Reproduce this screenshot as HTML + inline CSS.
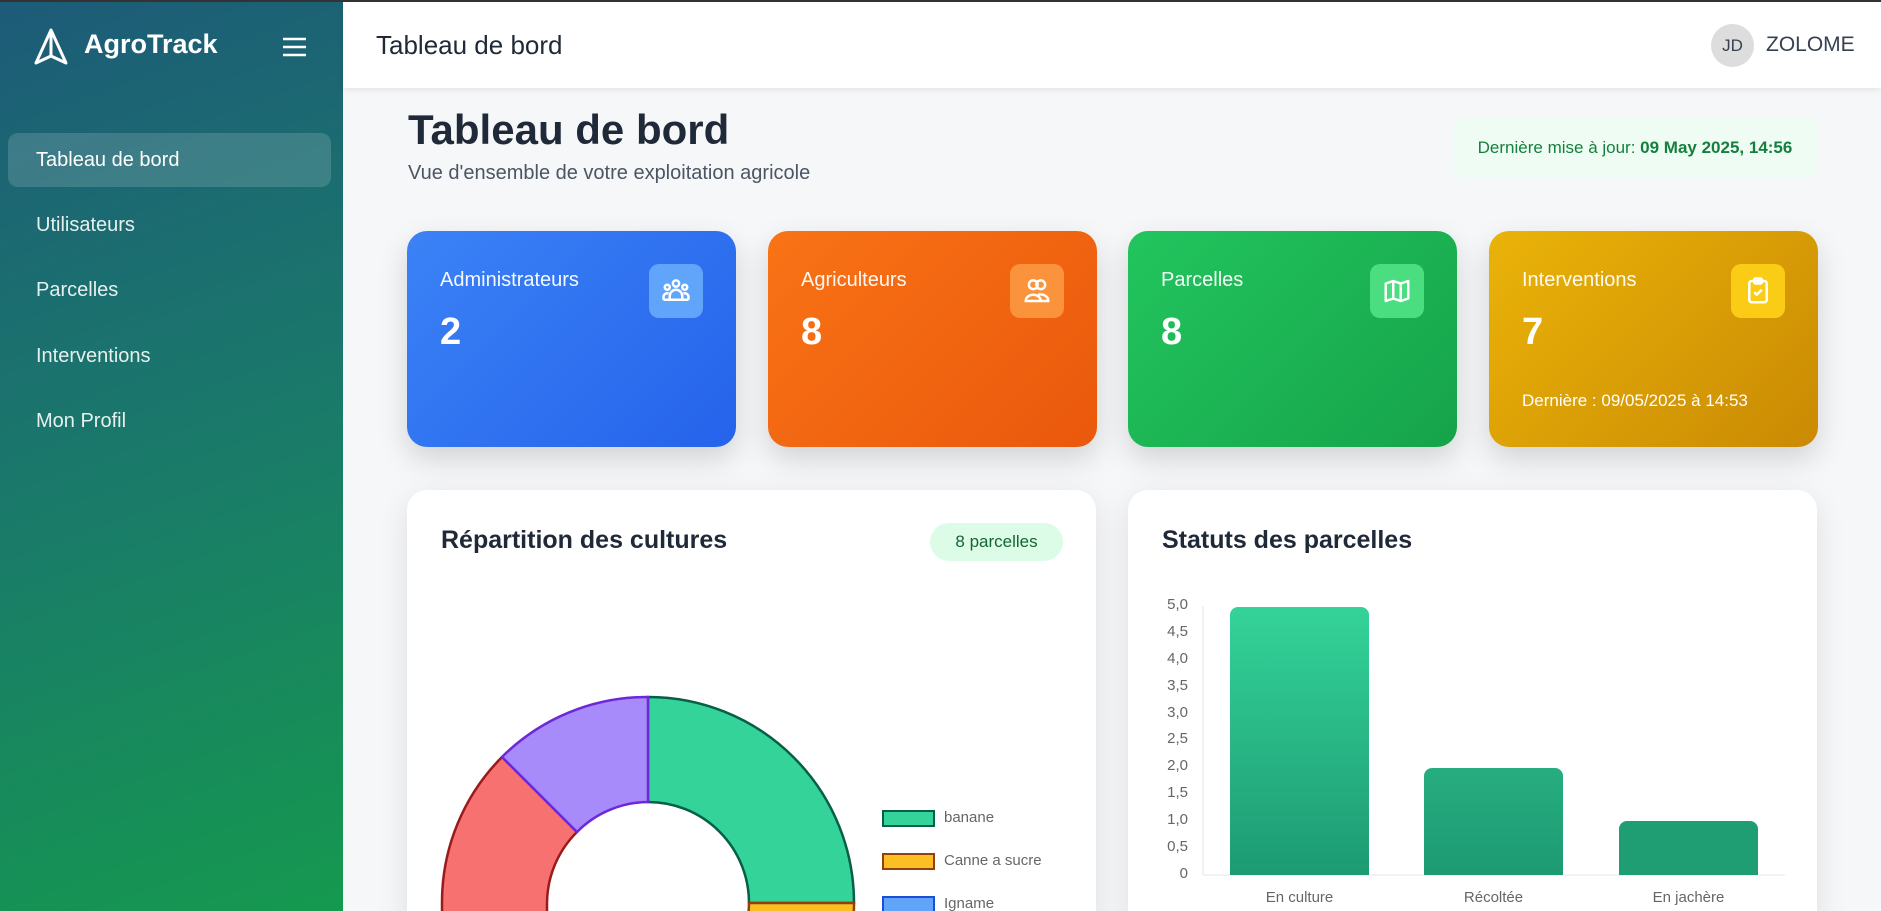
<!DOCTYPE html>
<html style="width:1881px;height:911px;overflow:hidden"><head><meta charset="utf-8"><style>
*{box-sizing:border-box;margin:0;padding:0}
body{width:1881px;height:911px;overflow:hidden;font-family:"Liberation Sans",sans-serif;background:#f6f7f9;position:relative;border-top:2px solid #333}
.side{position:absolute;left:0;top:0;width:343px;height:911px;background:linear-gradient(160deg,#1d5b78 0%,#1a7a6a 50%,#15994f 100%)}
.logo{position:absolute;left:33px;top:26px}
.brand{position:absolute;left:84px;top:27px;color:#fff;font-weight:bold;font-size:27px}
.ham{position:absolute;left:282px;top:34px}
.nav{position:absolute;left:8px;width:323px;height:54px;border-radius:10px;color:#e6f0ee;font-size:20px;padding-left:28px;line-height:54px}
.nav.act{background:rgba(255,255,255,.15);color:#fff}
.head{position:absolute;left:343px;top:0;right:0;height:86px;background:#fff;box-shadow:0 2px 6px rgba(0,0,0,.08)}
.head h1{position:absolute;left:33px;top:28px;font-size:26px;font-weight:normal;color:#1f2937}
.av{position:absolute;left:1368px;top:22px;width:43px;height:43px;border-radius:50%;background:#ddd;color:#374151;font-size:17px;text-align:center;line-height:43px}
.user{position:absolute;left:1423px;top:31px;font-size:21px;color:#374151}
.title{position:absolute;left:408px;top:104px;font-size:42px;font-weight:bold;color:#1f2937}
.sub{position:absolute;left:408px;top:160px;font-size:20px;color:#4b5563}
.upd{position:absolute;left:1453px;top:116px;width:364px;height:59px;background:#effcf3;border-radius:8px;color:#15803d;font-size:17px;line-height:59px;text-align:center}
.card{position:absolute;top:229px;width:329px;height:216px;border-radius:20px;color:#fff;box-shadow:0 12px 30px rgba(0,0,0,.15)}
.card .l{position:absolute;left:33px;top:38px;font-size:20px;opacity:.95}
.card .n{position:absolute;left:33px;top:80px;font-size:38px;font-weight:bold}
.card .i{position:absolute;right:33px;top:33px;width:54px;height:54px;border-radius:10px;display:flex;align-items:center;justify-content:center}
.card .d{position:absolute;left:33px;top:160px;font-size:17px}
.pan{position:absolute;top:488px;height:460px;background:#fff;border-radius:20px;box-shadow:0 8px 30px rgba(0,0,0,.1)}
.pill{position:absolute;left:930px;top:521px;width:133px;height:38px;border-radius:19px;background:#dcfce7;color:#166534;font-size:17px;text-align:center;line-height:38px}
.lg{position:absolute;left:882px;width:53px;height:17px;border:2px solid}
.lt{position:absolute;left:944px;font-size:15px;color:#666}
.yl{position:absolute;width:40px;left:1148px;text-align:right;font-size:15px;color:#666}
.bar{position:absolute;width:139px;border-radius:8px 8px 0 0;background:linear-gradient(#34d399,#1d9a72)}
.xl{position:absolute;top:887px;font-size:15px;color:#666;width:139px;text-align:center}
</style></head><body>
<div class="side">
<svg class="logo" width="36" height="38" viewBox="0 0 36 38"><path d="M18 2 L3 35 L18 28 L33 35 Z M18 2 L18 28" fill="none" stroke="#fff" stroke-width="3" stroke-linejoin="round"/></svg>
<div class="brand">AgroTrack</div>
<svg class="ham" width="25" height="22" viewBox="0 0 25 22"><path d="M1 3H24M1 11H24M1 19H24" stroke="#fff" stroke-width="2.5"/></svg>
<div class="nav act" style="top:131px">Tableau de bord</div>
<div class="nav" style="top:196px">Utilisateurs</div>
<div class="nav" style="top:261px">Parcelles</div>
<div class="nav" style="top:327px">Interventions</div>
<div class="nav" style="top:392px">Mon Profil</div>
</div>
<div class="head"><h1>Tableau de bord</h1><div class="av">JD</div><div class="user">ZOLOME</div></div>
<div class="title">Tableau de bord</div>
<div class="sub">Vue d'ensemble de votre exploitation agricole</div>
<div class="upd">Dernière mise à jour: <b>09 May 2025, 14:56</b></div>

<div class="card" style="left:407px;background:linear-gradient(135deg,#3b82f6,#2563eb)"><div class="l">Administrateurs</div><div class="n">2</div><div class="i" style="background:#60a5fa"><svg width="30" height="30" viewBox="0 0 24 24" fill="none" stroke="#fff" stroke-width="2"><circle cx="12" cy="6" r="2.5"/><circle cx="5" cy="9" r="2"/><circle cx="19" cy="9" r="2"/><path d="M7 19v-3a5 5 0 0 1 10 0v3ZM2 19v-2a3 3 0 0 1 4-3M22 19v-2a3 3 0 0 0-4-3M2 19h20"/></svg></div></div>
<div class="card" style="left:768px;background:linear-gradient(135deg,#f97316,#ea580c)"><div class="l">Agriculteurs</div><div class="n">8</div><div class="i" style="background:#fb923c"><svg width="30" height="30" viewBox="0 0 24 24" fill="none" stroke="#fff" stroke-width="2"><circle cx="9" cy="7" r="3.5"/><circle cx="15" cy="7" r="3.5"/><path d="M3 20a6 5 0 0 1 12 0ZM15 20h6a6 5 0 0 0-8-5"/></svg></div></div>
<div class="card" style="left:1128px;background:linear-gradient(135deg,#22c55e,#16a34a)"><div class="l">Parcelles</div><div class="n">8</div><div class="i" style="background:#4ade80"><svg width="30" height="30" viewBox="0 0 24 24" fill="none" stroke="#fff" stroke-width="2" stroke-linejoin="round"><path d="M3 6l6-2 6 2 6-2v14l-6 2-6-2-6 2ZM9 4v14M15 6v14"/></svg></div></div>
<div class="card" style="left:1489px;background:linear-gradient(135deg,#eab308,#ca8a04)"><div class="l">Interventions</div><div class="n">7</div><div class="i" style="background:#facc15"><svg width="30" height="30" viewBox="0 0 24 24" fill="none" stroke="#fff" stroke-width="2" stroke-linejoin="round"><rect x="5" y="4" width="14" height="17" rx="2"/><rect x="9" y="2" width="6" height="4" rx="1"/><path d="M9 13l2 2 4-4"/></svg></div><div class="d">Dernière : 09/05/2025 à 14:53</div></div>

<div class="pan" style="left:407px;width:689px"></div>
<div class="pan" style="left:1128px;width:689px"></div>
<div style="position:absolute;left:441px;top:524px;font-size:25px;font-weight:bold;color:#1f2937">Répartition des cultures</div>
<div class="pill">8 parcelles</div>
<div style="position:absolute;left:1162px;top:524px;font-size:25px;font-weight:bold;color:#1f2937">Statuts des parcelles</div>

<svg style="position:absolute;left:0;top:0" width="1881" height="911">
<g stroke-width="2.5">
<path d="M648 695 A206 206 0 0 1 854 901 L749 901 A101 101 0 0 0 648 800 Z" fill="#34d399" stroke="#065f46"/>
<path d="M854 901 A206 206 0 0 1 794 1047 L719 972 A101 101 0 0 0 749 901 Z" fill="#fbbf24" stroke="#92400e"/>
<path d="M502 755 A206 206 0 0 0 442 901 L442 1000 L547 1000 L547 901 A101 101 0 0 1 577 830 Z" fill="#f87171" stroke="#991b1b"/>
<path d="M648 695 L648 800 A101 101 0 0 0 577 830 L502 755 A206 206 0 0 1 648 695 Z" fill="#a78bfa" stroke="#6d28d9"/>
</g>
<line x1="1203" y1="604" x2="1203" y2="873" stroke="#e5e5e5"/>
<line x1="1203" y1="873" x2="1785" y2="873" stroke="#e5e5e5"/>
</svg>
<div class="lg" style="top:808px;background:#34d399;border-color:#065f46"></div><div class="lt" style="top:807px">banane</div>
<div class="lg" style="top:851px;background:#fbbf24;border-color:#92400e"></div><div class="lt" style="top:850px">Canne a sucre</div>
<div class="lg" style="top:894px;background:#60a5fa;border-color:#1d4ed8"></div><div class="lt" style="top:893px">Igname</div>

<div class="yl" style="top:594px">5,0</div><div class="yl" style="top:621px">4,5</div><div class="yl" style="top:648px">4,0</div><div class="yl" style="top:675px">3,5</div><div class="yl" style="top:702px">3,0</div><div class="yl" style="top:728px">2,5</div><div class="yl" style="top:755px">2,0</div><div class="yl" style="top:782px">1,5</div><div class="yl" style="top:809px">1,0</div><div class="yl" style="top:836px">0,5</div><div class="yl" style="top:863px">0</div>
<div class="bar" style="left:1230px;top:605px;height:268px"></div>
<div class="bar" style="left:1424px;top:766px;height:107px;background:linear-gradient(#27ad80,#1d9a72)"></div>
<div class="bar" style="left:1619px;top:819px;height:54px;background:#1f9e74"></div>
<div class="xl" style="left:1230px">En culture</div>
<div class="xl" style="left:1424px">Récoltée</div>
<div class="xl" style="left:1619px">En jachère</div>
</body></html>
